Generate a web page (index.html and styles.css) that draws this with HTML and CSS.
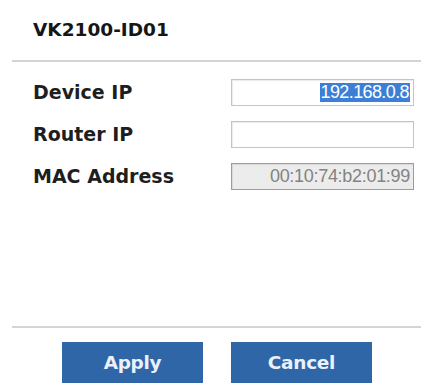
FILE: index.html
```html
<!DOCTYPE html>
<html>
<head>
<meta charset="utf-8">
<link rel="stylesheet" href="styles.css">
</head>
<body>
<div class="page">
  <header class="head">
    <h1 class="title">VK2100-ID01</h1>
  </header>
  <hr class="rule">
  <section class="form">
    <div class="row">
      <span class="label">Device IP</span>
      <div class="field"><span class="sel">192.168.0.8</span></div>
    </div>
    <div class="row">
      <span class="label">Router IP</span>
      <div class="field"></div>
    </div>
    <div class="row">
      <span class="label">MAC Address</span>
      <div class="field field-ro">00:10:74:b2:01:99</div>
    </div>
  </section>
  <div class="spacer"></div>
  <hr class="rule">
  <footer class="actions">
    <button class="btn">Apply</button>
    <button class="btn">Cancel</button>
  </footer>
</div>
</body>
</html>
```
FILE: styles.css
```css
html, body {
  margin: 0;
  padding: 0;
  background: #ffffff;
}
.page {
  display: flex;
  flex-direction: column;
  height: 387px;
  font-family: "DejaVu Sans", "Liberation Sans", sans-serif;
  color: #1c1c1c;
}
.head {
  padding: 19px 0 0 33px;
  height: 41px;
  box-sizing: border-box;
  height: 60px;
}
.title {
  margin: 0;
  font-size: 18.5px;
  line-height: 22px;
  font-weight: bold;
  color: #161616;
}
.rule {
  margin: 0 5px 0 12px;
  border: 0;
  height: 2px;
  background: #d4d4d4;
}
.form {
  padding: 9px 12px 0 33px;
  display: flex;
  flex-direction: column;
}
.row {
  display: flex;
  align-items: center;
  height: 42px;
}
.label {
  width: 198px;
  font-size: 19px;
  line-height: 42px;
  font-weight: bold;
  color: #1e1e1e;
}
.field {
  box-sizing: border-box;
  width: 183px;
  height: 27px;
  border: 1px solid #c4c4c4;
  box-shadow: inset 1px 1px 1px rgba(0,0,0,0.08);
  background: #fff;
  display: flex;
  align-items: center;
  justify-content: flex-end;
  padding-right: 3px;
  font-family: "Liberation Sans", Arial, sans-serif;
  font-size: 18px;
  letter-spacing: -0.6px;
}
.sel {
  background: #3b7fd6;
  color: #ffffff;
  line-height: 19px;
  padding: 0 1px 0 1px;
}
.field-ro {
  background: #ececec;
  border-color: #9c9c9c;
  color: #838383;
  letter-spacing: -0.3px;
}
.spacer {
  flex: 1;
}
.actions {
  display: flex;
  gap: 28px;
  padding: 14px 0 4px 62px;
}
.btn {
  width: 141px;
  height: 41px;
  border: 0;
  border-radius: 0;
  background: #2e66a8;
  color: #eaf1fb;
  font-family: "DejaVu Sans", "Liberation Sans", sans-serif;
  font-size: 18.5px;
  font-weight: bold;
  letter-spacing: -0.3px;
  padding: 0;
}
```
